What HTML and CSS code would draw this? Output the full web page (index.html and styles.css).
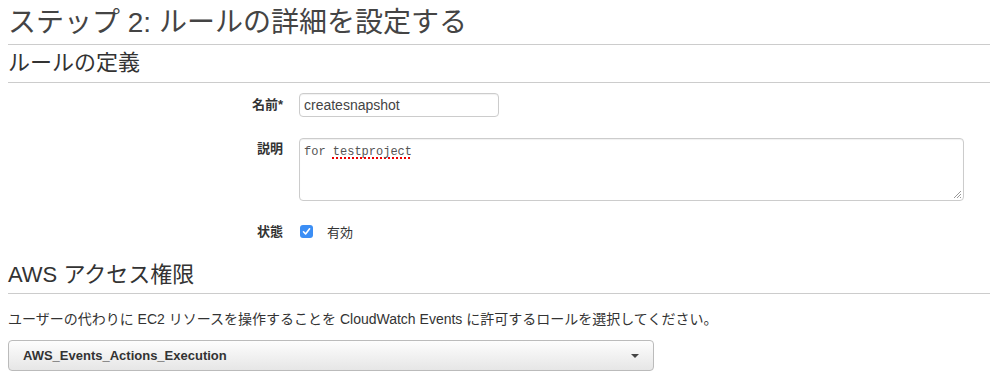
FILE: index.html
```html
<!DOCTYPE html>
<html lang="ja">
<head>
<meta charset="utf-8">
<title>ステップ 2: ルールの詳細を設定する</title>
<link rel="stylesheet" href="styles.css">
</head>
<body>
<main class="page">
  <h1 class="page-title">ステップ 2: ルールの詳細を設定する</h1>
  <h2 class="section-title">ルールの定義</h2>
  <div class="form">
    <label class="form-label label-name" for="rule-name">名前*</label>
    <div class="form-field"><input id="rule-name" class="text-input" type="text" value="createsnapshot"></div>

    <span class="form-label label-desc">説明</span>
    <div class="form-field">
      <div class="textarea">for <span class="spell">testproject</span><svg class="grip" width="10" height="10" viewBox="0 0 10 10"><path d="M9 2 L2 9 M9 5 L5 9 M9 8 L8 9" stroke="#999" stroke-width="1" fill="none"/></svg></div>
    </div>

    <span class="form-label label-state">状態</span>
    <div class="form-field check-row">
      <span class="checkbox"><svg width="13" height="13" viewBox="0 0 13 13"><path d="M3.5 6.8 L5.6 9 L9.6 3.8" stroke="#fff" stroke-width="1.6" fill="none" stroke-linecap="round" stroke-linejoin="round"/></svg></span>
      <span class="check-text">有効</span>
    </div>
  </div>

  <h2 class="section-title section-aws">AWS アクセス権限</h2>
  <p class="help">ユーザーの代わりに EC2 リソースを操作することを CloudWatch Events に許可するロールを選択してください。</p>
  <div class="select">
    <span class="select-value">AWS_Events_Actions_Execution</span>
    <span class="caret"></span>
  </div>
</main>
</body>
</html>
```

FILE: styles.css
```css
* { box-sizing: border-box; }

html, body {
  margin: 0;
  padding: 0;
  background: #fff;
}

body {
  font-family: "Liberation Sans", "Noto Sans CJK JP", sans-serif;
  color: #444;
}

.page {
  padding-left: 8px;
}

.page-title {
  margin: 0;
  padding: 5px 0 3px;
  font-size: 28px;
  line-height: 36px;
  font-weight: normal;
  color: #444;
  border-bottom: 1px solid #ccc;
}

.section-title {
  margin: 3px 0 0;
  padding: 0 0 4px;
  font-size: 22px;
  line-height: 30px;
  font-weight: normal;
  color: #333;
  border-bottom: 1px solid #ccc;
}

.section-aws {
  margin-top: 20px;
  padding-bottom: 3px;
}

.form {
  display: grid;
  grid-template-columns: 275px 1fr;
  column-gap: 16px;
  padding-top: 10px;
}

.form-label {
  text-align: right;
  font-size: 13px;
  font-weight: bold;
  color: #333;
  line-height: 16px;
}

.label-name { padding-top: 4px; }
.label-desc { margin-top: 21px; padding-top: 3px; }
.label-state { margin-top: 22px; padding-top: 1px; }

.text-input {
  display: block;
  width: 200px;
  height: 24px;
  margin: 0;
  padding: 0 4px;
  border: 1px solid #ccc;
  border-radius: 4px;
  box-shadow: inset 0 1px 1px rgba(0,0,0,0.06);
  font-family: "Liberation Sans", "Noto Sans CJK JP", sans-serif;
  font-size: 14px;
  color: #444;
  background: #fff;
  outline: none;
}

.form-field:nth-child(4) { margin-top: 21px; }

.textarea {
  position: relative;
  width: 665px;
  height: 63px;
  padding: 5px 4px;
  border: 1px solid #ccc;
  border-radius: 4px;
  box-shadow: inset 0 1px 1px rgba(0,0,0,0.06);
  font-family: "Liberation Mono", "DejaVu Sans Mono", monospace;
  font-size: 12px;
  line-height: 16px;
  color: #555;
}

.spell {
  text-decoration: underline dotted #e00;
  text-decoration-thickness: 2px;
  text-underline-offset: 2px;
}

.grip {
  position: absolute;
  right: 1px;
  bottom: 1px;
}

.check-row {
  display: flex;
  align-items: center;
  gap: 14px;
  height: 16px;
  margin-top: 22px;
}

.checkbox {
  display: inline-flex;
  width: 13px;
  height: 13px;
  margin-left: 1px;
  border-radius: 3px;
  background: #3b8ef5;
}

.check-text {
  font-size: 13px;
  color: #333;
}

.help {
  margin: 16px 0 0;
  font-size: 14px;
  line-height: 18px;
  color: #333;
}

.select {
  display: flex;
  align-items: center;
  justify-content: space-between;
  width: 646px;
  height: 31px;
  margin-top: 12px;
  padding: 0 12px 0 14px;
  border: 1px solid #bbb;
  border-radius: 4px;
  background: linear-gradient(#fdfdfd, #e6e6e6);
}

.select-value {
  font-size: 13px;
  font-weight: bold;
  color: #333;
}

.caret {
  width: 0;
  height: 0;
  border-left: 4px solid transparent;
  border-right: 4px solid transparent;
  border-top: 4px solid #444;
  margin-right: 2px;
}
```
